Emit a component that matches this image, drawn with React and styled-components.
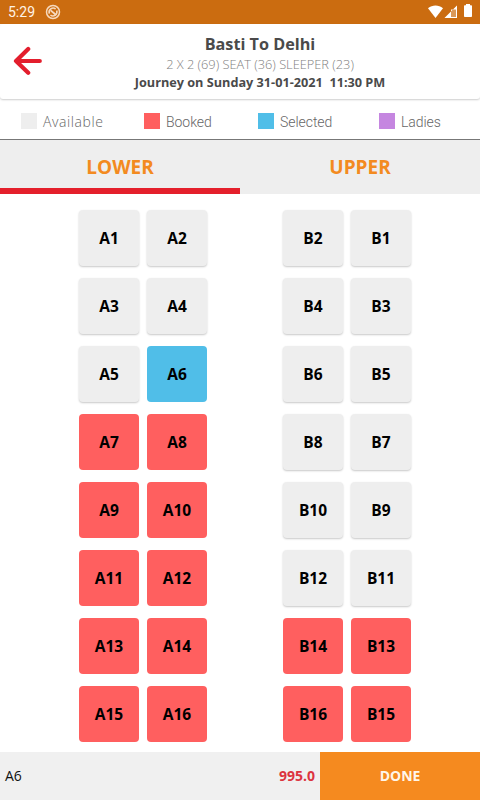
import React from "react";
import styled, { createGlobalStyle } from "styled-components";

const rows = [
  ["A1", "A2", "B2", "B1"],
  ["A3", "A4", "B4", "B3"],
  ["A5", "A6", "B6", "B5"],
  ["A7", "A8", "B8", "B7"],
  ["A9", "A10", "B10", "B9"],
  ["A11", "A12", "B12", "B11"],
  ["A13", "A14", "B14", "B13"],
  ["A15", "A16", "B16", "B15"],
];

const booked = [
  "A7", "A8", "A9", "A10", "A11", "A12", "A13", "A14", "A15", "A16",
  "B13", "B14", "B15", "B16",
];

const selected = ["A6"];

const colors = {
  available: "#eeeeee",
  booked: "#ff5f5f",
  selected: "#50bee8",
  ladies: "#c586e0",
};

const getStatus = (seat) => {
  if (selected.includes(seat)) return "selected";
  if (booked.includes(seat)) return "booked";
  return "available";
};

const SyncIcon = () => (
  <svg width="16" height="16" viewBox="0 0 16 16" fill="none">
    <circle cx="8" cy="8" r="6.5" stroke="#f6d9bd" strokeWidth="1.5" />
    <path
      d="M4.4 9.6A4 4 0 0 1 10.6 5M11.7 6.6A4 4 0 0 1 5.4 11"
      stroke="#f6d9bd"
      strokeWidth="1.6"
    />
    <path d="M5 4.8 11.8 10.2 10.6 11.9 7.6 9.2 5.6 7.4Z" fill="#f6d9bd" />
  </svg>
);

const StatusIcons = () => (
  <svg width="46" height="16" viewBox="0 0 46 16" fill="#fff">
    <path d="M0 4.2C4.4.6 10.6.6 15 4.2L7.5 14Z" />
    <path d="M16.5 14 29 1.6V14Z" fillOpacity=".3" />
    <path d="M16.5 14 29 1.6V5.5H23V14Z" />
    <path d="M28 4H29V14H23V13H28Z" />
    <path d="M36.8 1.2H38V0H42V1.2H43.2Q44 1.2 44 2V12.2Q44 13 43.2 13H36.8Q36 13 36 12.2V2Q36 1.2 36.8 1.2Z" />
  </svg>
);

const BackIcon = () => (
  <svg width="30" height="30" viewBox="0 0 30 30" fill="none">
    <path
      d="M15.2 2.9 3 15 15.2 26.8M3 15H26.8"
      stroke="#e31e2d"
      strokeWidth="4.2"
      strokeLinecap="round"
      strokeLinejoin="round"
    />
  </svg>
);

const App = () => {
  return (
    <>
      <GlobalStyle />
      <Screen>
        <StatusBar>
          <Clock>5:29</Clock>
          <SyncIcon />
          <Spacer />
          <StatusIcons />
        </StatusBar>
        <Header>
          <BackButton aria-label="Back">
            <BackIcon />
          </BackButton>
          <Trip>
            <h1>Basti To Delhi</h1>
            <p>2 X 2 (69) SEAT (36) SLEEPER (23)</p>
            <h2>Journey on Sunday 31-01-2021&nbsp; 11:30 PM</h2>
          </Trip>
        </Header>
        <Legend>
          <LegendItem $wide>
            <Swatch $status="available" />
            <span>Available</span>
          </LegendItem>
          <LegendItem>
            <Swatch $status="booked" />
            <span>Booked</span>
          </LegendItem>
          <LegendItem>
            <Swatch $status="selected" />
            <span>Selected</span>
          </LegendItem>
          <LegendItem>
            <Swatch $status="ladies" />
            <span>Ladies</span>
          </LegendItem>
        </Legend>
        <Tabs>
          <Tab $active>LOWER</Tab>
          <Tab>UPPER</Tab>
        </Tabs>
        <Seats>
          {rows.map((row) => (
            <Row key={row[0]}>
              {row.map((seat) => (
                <Seat key={seat} $status={getStatus(seat)}>
                  {seat}
                </Seat>
              ))}
            </Row>
          ))}
        </Seats>
        <Footer>
          <Chosen>{selected.join(", ")}</Chosen>
          <Price>995.0</Price>
          <Done>DONE</Done>
        </Footer>
      </Screen>
    </>
  );
};

const GlobalStyle = createGlobalStyle`
  * {
    margin: 0;
    padding: 0;
    box-sizing: border-box;
  }
  body {
    background: white;
    font-family: "Open Sans", "Noto Sans", sans-serif;
  }
  button {
    border: none;
    background: none;
    font-family: inherit;
  }
  svg {
    display: block;
    flex-shrink: 0;
  }
`;
const Screen = styled.div`
  width: 480px;
  height: 800px;
  display: flex;
  flex-direction: column;
  overflow: hidden;
`;
const StatusBar = styled.div`
  height: 24px;
  flex-shrink: 0;
  display: flex;
  align-items: center;
  padding: 0 6px 0 8px;
  background: #cb6c10;
`;
const Clock = styled.span`
  width: 37px;
  font-family: Roboto, sans-serif;
  font-size: 14px;
  color: #fff3e6;
`;
const Spacer = styled.div`
  flex: 1;
`;
const Header = styled.header`
  height: 75px;
  flex-shrink: 0;
  display: flex;
  background: white;
  border-radius: 3px;
  box-shadow: 0 1px 2px rgba(0, 0, 0, 0.2);
`;
const BackButton = styled.button`
  width: 40px;
  padding: 22px 0 0 13px;
  display: flex;
`;
const Trip = styled.div`
  flex: 1;
  padding-top: 9px;
  text-align: center;
  white-space: nowrap;
  h1 {
    font-size: 16.2px;
    line-height: 22px;
    font-weight: 680;
    color: #4a4a4a;
  }
  p {
    font-size: 12.8px;
    line-height: 19px;
    font-weight: 300;
    color: #808080;
  }
  h2 {
    font-size: 12.7px;
    line-height: 17px;
    font-weight: 680;
    color: #4a4a4a;
  }
`;
const Legend = styled.div`
  height: 41px;
  flex-shrink: 0;
  display: grid;
  grid-template-columns: 123px 114px 121px 1fr;
  padding: 4px 0 0 21px;
  border-bottom: 1px solid #777;
`;
const LegendItem = styled.div`
  display: flex;
  align-items: center;
  gap: 6px;
  font-family: ${(props) =>
    props.$wide ? `"Open Sans", sans-serif` : "Roboto, sans-serif"};
  font-size: 14px;
  font-weight: ${(props) => (props.$wide ? 300 : 350)};
  letter-spacing: ${(props) => (props.$wide ? "0.6px" : "-0.05px")};
  line-height: 20px;
  color: #666;
  span {
    padding-top: 2px;
  }
`;
const Swatch = styled.div`
  width: 16px;
  height: 16px;
  background: ${(props) => colors[props.$status]};
`;
const Tabs = styled.div`
  height: 54px;
  flex-shrink: 0;
  display: flex;
  background: #eeeeee;
`;
const Tab = styled.button`
  flex: 1;
  padding-top: 5px;
  border-bottom: 6px solid ${(props) => (props.$active ? "#e41f2b" : "#eeeeee")};
  font-size: 19px;
  font-weight: 680;
  color: #f38a20;
`;
const Seats = styled.div`
  flex: 1;
  padding: 16px 0 0 79px;
  display: flex;
  flex-direction: column;
  gap: 12px;
`;
const Row = styled.div`
  display: flex;
  gap: 8px;
`;
const Seat = styled.button`
  width: 60px;
  height: 56px;
  border-radius: 4px;
  background: ${(props) => colors[props.$status]};
  box-shadow: ${(props) =>
    props.$status === "available" ? "0 1px 2px rgba(0, 0, 0, 0.22)" : "none"};
  font-size: 15.5px;
  font-weight: 680;
  color: #000;
  &:nth-child(3) {
    margin-left: 68px;
  }
`;
const Footer = styled.footer`
  height: 48px;
  flex-shrink: 0;
  display: flex;
  align-items: center;
  background: #f0f0f0;
`;
const Chosen = styled.span`
  flex: 1;
  padding: 0 0 2px 5px;
  font-size: 14px;
  color: #111;
`;
const Price = styled.span`
  padding: 0 5px 2px 0;
  font-size: 14px;
  font-weight: 700;
  color: #dc3440;
`;
const Done = styled.button`
  width: 160px;
  height: 48px;
  padding-bottom: 2px;
  background: #f58a1f;
  font-size: 14px;
  font-weight: 700;
  color: #fff6ea;
`;
export default App;
